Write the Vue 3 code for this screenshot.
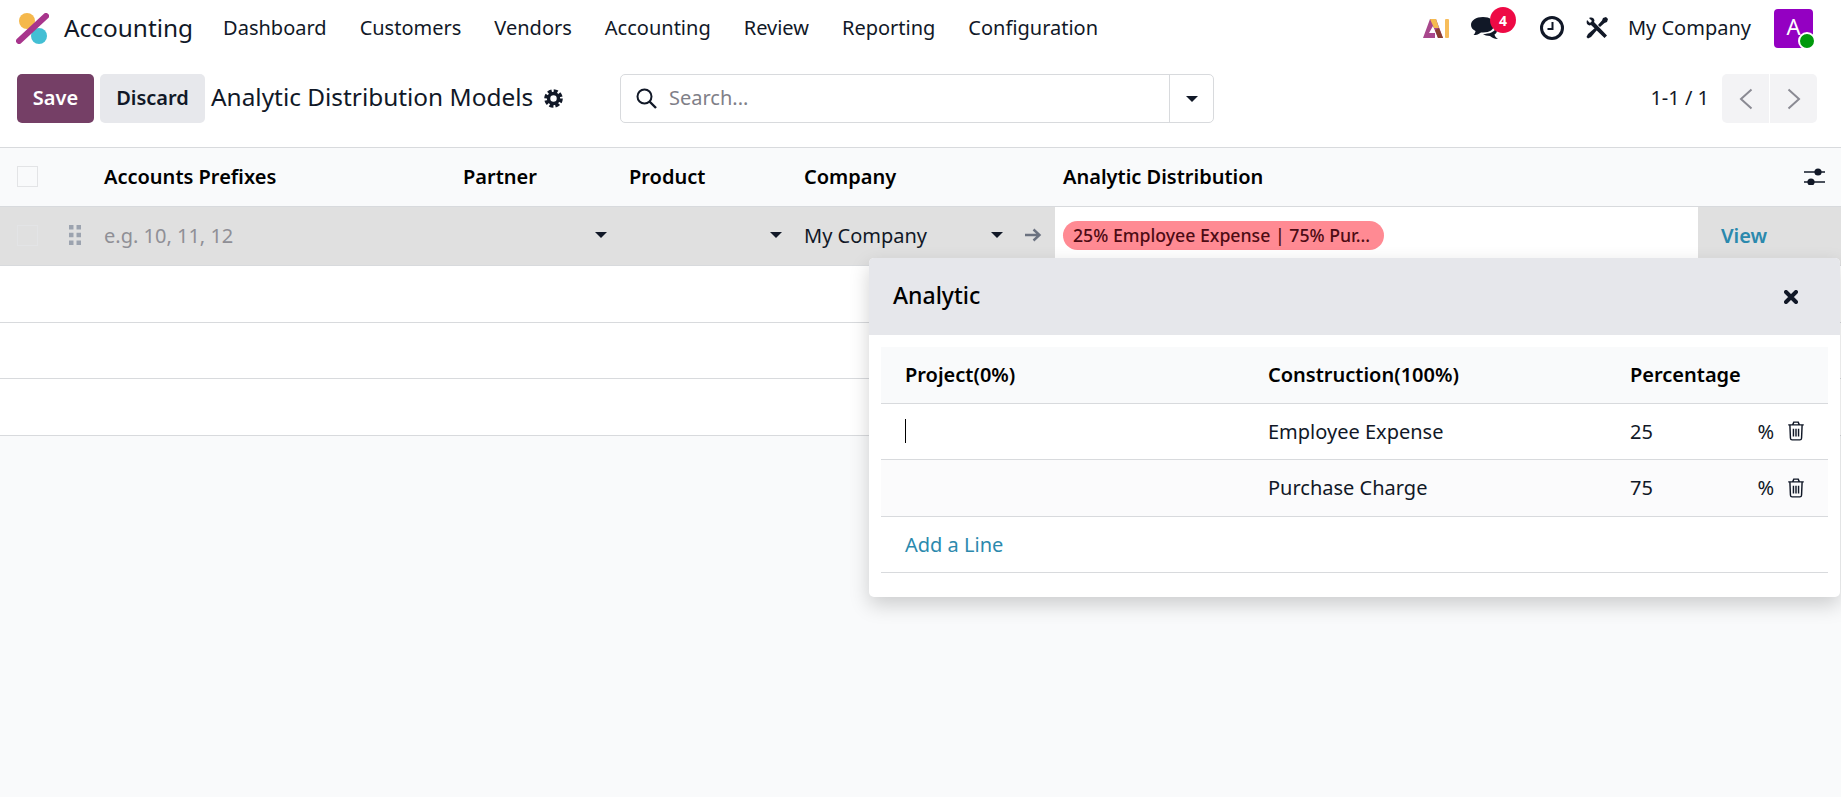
<script setup>
const navItems = ['Dashboard', 'Customers', 'Vendors', 'Accounting', 'Review', 'Reporting', 'Configuration']

const lines = [
  { name: 'Employee Expense', percent: 25 },
  { name: 'Purchase Charge', percent: 75 },
]
</script>

<template>
  <div class="page">
    <header class="nav">
      <svg class="logo" viewBox="0 0 33 31" width="33" height="31">
        <circle cx="11" cy="8" r="8" fill="#f5b84c" />
        <circle cx="23" cy="23" r="8" fill="#43bfd4" />
        <line x1="3" y1="28" x2="30" y2="3" stroke="#a8358c" stroke-width="6" stroke-linecap="round" />
      </svg>
      <span class="app-name">Accounting</span>
      <nav class="menu">
        <a v-for="item in navItems" :key="item">{{ item }}</a>
      </nav>

      <div class="systray">
        <svg class="ai" viewBox="0 0 26 20" width="26" height="20">
          <path d="M0 20 L7 1 H13 L20 20 H15 L10 8 L6 15 H12 V20 Z" fill="#a8478c" />
          <path d="M7 1 H13 L16 10 L11 10 Z" fill="#f5bb4f" />
          <path d="M12 12 L16 10 L20 20 H15 Z" fill="#8a4030" />
          <rect x="22" y="1" width="4" height="19" rx="1" fill="#f7bd5b" />
        </svg>
        <div class="chat">
          <svg viewBox="0 0 28 22" width="28" height="22">
            <path d="M12 0 C19 0 23 3.5 23 8 C23 12.5 19 15.5 12 15.5 L10 15.4 C8 17 5.5 18 2.5 18 C4 16.5 4.5 15 4.5 14 C1.5 12.5 0 10.5 0 8 C0 3.5 5 0 12 0 Z" fill="#111827" />
            <path d="M25 10.5 C27 14 25.5 16.5 23.5 17.5 C23.8 19 25 21 27 22 C23 22 20.5 20.5 19 19 C16 19 13.5 18.2 12 17 C18 17 24 15 25 10.5 Z" fill="#111827" />
          </svg>
          <span class="badge">4</span>
        </div>
        <svg class="clock" viewBox="0 0 24 24" width="24" height="24">
          <circle cx="12" cy="12" r="10.5" fill="none" stroke="#111827" stroke-width="3" />
          <path d="M12.5 6 V13 H7.5" fill="none" stroke="#111827" stroke-width="2" />
        </svg>
        <svg class="tools" viewBox="0 0 22 22" width="22" height="22">
          <path d="M3 1 L6 4 L4 6 L1 3 C0 6 1 8 3.5 8.5 L5 8 L18.5 21 L21 18.5 L8 5 L8.5 3.5 C8 1 6 0 3 1 Z" fill="#111827" />
          <path d="M12 8 L16 3.5 L17 1 L20 0 L22 2 L21 5 L18.5 6 L14 10 Z" fill="#111827" />
          <path d="M9.5 10.5 L2 17 L0.5 20 L2 21.5 L5 20 L11.5 12.5 Z" fill="#111827" />
        </svg>
        <span class="company">My Company</span>
        <div class="avatar">
          A
          <span class="status"></span>
        </div>
      </div>
    </header>

    <section class="control">
      <button class="btn btn-save">Save</button>
      <button class="btn btn-discard">Discard</button>
      <span class="title">Analytic Distribution Models</span>
      <svg class="gear" viewBox="0 0 20 20" width="19" height="19">
        <circle cx="10" cy="10" r="5.2" fill="none" stroke="#111827" stroke-width="3.6" />
        <circle cx="10" cy="10" r="8" fill="none" stroke="#111827" stroke-width="3.6" stroke-dasharray="4.2 2.08" />
      </svg>

      <div class="search">
        <svg viewBox="0 0 21 21" width="21" height="21">
          <circle cx="8.5" cy="8.5" r="7" fill="none" stroke="#111827" stroke-width="2" />
          <line x1="13.5" y1="13.5" x2="20" y2="20" stroke="#111827" stroke-width="2.4" />
        </svg>
        <span class="search-text">Search...</span>
        <span class="search-drop"><i class="caret"></i></span>
      </div>

      <div class="pager">
        <span class="pager-text">1-1 / 1</span>
        <div class="pager-btns">
          <span class="pager-btn">
            <svg viewBox="0 0 14 22" width="14" height="22"><path d="M12.5 1.5 L2 11 L12.5 20.5" fill="none" stroke="#8a8a93" stroke-width="2" /></svg>
          </span>
          <span class="pager-btn">
            <svg viewBox="0 0 14 22" width="14" height="22"><path d="M1.5 1.5 L12 11 L1.5 20.5" fill="none" stroke="#8a8a93" stroke-width="2" /></svg>
          </span>
        </div>
      </div>
    </section>

    <section class="list">
      <div class="row head">
        <div class="cell"><span class="check"></span></div>
        <div class="cell"></div>
        <div class="cell">Accounts Prefixes</div>
        <div class="cell">Partner</div>
        <div class="cell">Product</div>
        <div class="cell">Company</div>
        <div class="cell">Analytic Distribution</div>
        <div class="cell cell-opts">
          <svg viewBox="0 0 21 17" width="21" height="17">
            <line x1="0" y1="4" x2="21" y2="4" stroke="#111827" stroke-width="1.5" />
            <line x1="0" y1="14" x2="21" y2="14" stroke="#111827" stroke-width="1.5" />
            <circle cx="14" cy="4" r="3.6" fill="#111827" />
            <circle cx="7" cy="14" r="3.6" fill="#111827" />
          </svg>
        </div>
      </div>

      <div class="row edit">
        <div class="cell"><span class="check"></span></div>
        <div class="cell">
          <svg class="handle" viewBox="0 0 12 20" width="12" height="20">
            <g fill="#9ca3af">
              <rect x="0" y="0" width="4.5" height="4.5" /><rect x="7.5" y="0" width="4.5" height="4.5" />
              <rect x="0" y="7.75" width="4.5" height="4.5" /><rect x="7.5" y="7.75" width="4.5" height="4.5" />
              <rect x="0" y="15.5" width="4.5" height="4.5" /><rect x="7.5" y="15.5" width="4.5" height="4.5" />
            </g>
          </svg>
        </div>
        <div class="cell placeholder">e.g. 10, 11, 12</div>
        <div class="cell cell-select"><i class="caret"></i></div>
        <div class="cell cell-select"><i class="caret"></i></div>
        <div class="cell cell-company">
          <span>My Company</span>
          <i class="caret"></i>
          <svg class="arrow" viewBox="0 0 18 14" width="18" height="14">
            <path d="M1 7 H15 M9.5 1.5 L15.5 7 L9.5 12.5" fill="none" stroke="#6b7280" stroke-width="2.4" />
          </svg>
        </div>
        <div class="cell cell-analytic">
          <span class="pill">25% Employee Expense | 75% Pur...</span>
        </div>
        <div class="cell cell-view">View</div>
      </div>

      <div class="row empty"></div>
      <div class="row empty"></div>
      <div class="row empty"></div>

      <div class="popover">
        <div class="pop-head">
          <span class="pop-title">Analytic</span>
          <svg viewBox="0 0 14 14" width="14" height="14">
            <path d="M2 2 L12 12 M12 2 L2 12" stroke="#111827" stroke-width="4" stroke-linecap="round" />
          </svg>
        </div>
        <div class="pop-body">
          <div class="pop-row pop-th">
            <span>Project(0%)</span>
            <span>Construction(100%)</span>
            <span>Percentage</span>
          </div>
          <div v-for="(line, index) in lines" :key="line.name" class="pop-row" :class="{ 'pop-row-alt': index === 1 }">
            <span><i v-if="index === 0" class="text-caret"></i></span>
            <span>{{ line.name }}</span>
            <span class="pop-percent">
              {{ line.percent }}
              <span class="pop-tail">
                %
                <svg viewBox="0 0 16 18" width="18" height="20">
                  <path d="M1 3.5 H15 M5 3.5 L6 1 H10 L11 3.5 M2.5 3.5 L3 15.5 Q3.1 17 4.5 17 H11.5 Q12.9 17 13 15.5 L13.5 3.5 M5.7 7 V14 M8 7 V14 M10.3 7 V14" fill="none" stroke="#111827" stroke-width="1.3" />
                </svg>
              </span>
            </span>
          </div>
          <div class="pop-row pop-add"><a>Add a Line</a></div>
        </div>
      </div>
    </section>
  </div>
</template>

<style>
body {
  background: #f9fafb;
}
</style>

<style scoped>
.page {
  min-height: 797px;
  background: #f9fafb;
  color: #111827;
  font-family: "Noto Sans", sans-serif;
  font-size: 20px;
  overflow: hidden;
}

.nav {
  height: 56px;
  background: #fff;
  display: flex;
  align-items: center;
  padding-left: 16px;
  padding-right: 28px;
}

.app-name {
  font-size: 24.4px;
  margin-left: 15px;
  padding-bottom: 2px;
}

.menu {
  display: flex;
  gap: 33px;
  margin-left: 30px;
  padding-bottom: 2px;
}

.systray {
  margin-left: auto;
  display: flex;
  align-items: center;
}

.chat {
  position: relative;
  margin-left: 22px;
  width: 32px;
  height: 22px;
  padding-top: 0;
}

.badge {
  position: absolute;
  left: 19px;
  top: -10px;
  width: 26px;
  height: 26px;
  border-radius: 50%;
  background: #ee0a45;
  color: #fff;
  font-size: 14px;
  font-weight: 700;
  display: flex;
  align-items: center;
  justify-content: center;
}

.clock {
  margin-left: 37px;
}

.tools {
  margin-left: 22px;
}

.company {
  margin-left: 20px;
  padding-bottom: 2px;
}

.avatar {
  position: relative;
  margin-left: 23px;
  width: 39px;
  height: 39px;
  border-radius: 4px;
  background: #9400c2;
  color: #fff;
  font-size: 22px;
  padding-bottom: 5px;
  box-sizing: border-box;
  display: flex;
  align-items: center;
  justify-content: center;
}

.status {
  position: absolute;
  right: -3px;
  bottom: -2px;
  width: 14px;
  height: 14px;
  border: 2px solid #fff;
  border-radius: 50%;
  background: #00990c;
}

.control {
  height: 91px;
  background: #fff;
  padding: 18px 24px 24px 17px;
  box-sizing: border-box;
  display: flex;
  align-items: center;
}

.btn {
  height: 49px;
  border: 0;
  border-radius: 5px;
  font-family: inherit;
  font-size: 20px;
  font-weight: 600;
  padding: 0 0 2px;
}

.btn-save {
  width: 77px;
  background: #753f66;
  color: #fff;
}

.btn-discard {
  width: 105px;
  margin-left: 6px;
  background: #e7e8ec;
  color: #111827;
}

.title {
  font-size: 24.4px;
  margin-left: 6px;
  padding-bottom: 5px;
}

.gear {
  margin-left: 11px;
}

.search {
  position: absolute;
  left: 620px;
  width: 594px;
  height: 49px;
  box-sizing: border-box;
  background: #fff;
  border: 1px solid #d8dadd;
  border-radius: 5px;
  display: flex;
  align-items: center;
  padding-left: 15px;
}

.search-text {
  margin-left: 12px;
  color: #7f8088;
  padding-bottom: 2px;
}

.search-drop {
  margin-left: auto;
  width: 43px;
  height: 100%;
  border-left: 1px solid #d8dadd;
  display: flex;
  align-items: center;
  justify-content: center;
}

.caret {
  display: block;
  width: 0;
  height: 0;
  border-left: 6px solid transparent;
  border-right: 6px solid transparent;
  border-top: 6px solid #111827;
}

.pager {
  margin-left: auto;
  display: flex;
  align-items: center;
  gap: 13px;
}

.pager-text {
  padding-bottom: 2px;
}

.pager-btns {
  display: flex;
  gap: 1px;
}

.pager-btn {
  width: 47px;
  height: 49px;
  background: #f3f3f5;
  display: flex;
  align-items: center;
  justify-content: center;
}

.pager-btn:first-child {
  border-radius: 5px 0 0 5px;
}

.pager-btn:last-child {
  border-radius: 0 5px 5px 0;
}

.list {
  position: relative;
}

.row {
  display: grid;
  grid-template-columns: 58px 38px 359px 166px 175px 259px 643px 143px;
  box-sizing: border-box;
  border-bottom: 1px solid #d8dadd;
}

.cell {
  display: flex;
  align-items: center;
  padding-left: 8px;
  box-sizing: border-box;
}

.cell:first-child {
  padding-left: 17px;
}

.head {
  height: 60px;
  background: #f9fafb;
  border-top: 1px solid #d8dadd;
  padding-bottom: 2px;
  font-weight: 600;
  color: #000;
}

.cell-opts {
  padding-left: 106px;
}

.check {
  width: 21px;
  height: 21px;
  box-sizing: border-box;
  border: 1px solid #e3e4e6;
  background: transparent;
}

.edit {
  height: 59px;
  padding-bottom: 2px;
  background: #e0e0e0;
}

.edit .cell:nth-child(2) {
  padding-left: 11px;
}

.placeholder {
  color: #8f8f96;
}

.cell-select {
  justify-content: flex-end;
  padding-right: 14px;
}

.cell-company {
  padding-right: 13px;
}

.cell-company .caret {
  margin-left: auto;
}

.arrow {
  margin-left: 21px;
}

.cell-analytic {
  background: #fff;
}

.pill {
  height: 29px;
  width: 321px;
  box-sizing: border-box;
  padding-left: 10px;
  border-radius: 15px;
  background: #ff8a93;
  color: #4d0b14;
  font-size: 17.7px;
  font-weight: 500;
  line-height: 28px;
  white-space: nowrap;
}

.cell-view {
  padding-left: 23px;
  color: #2b89ad;
  font-weight: 600;
}

.empty {
  height: 56.67px;
  background: #fff;
}

.popover {
  position: absolute;
  left: 869px;
  right: 1px;
  top: 111px;
  height: 339px;
  background: #fff;
  border-radius: 5px;
  box-shadow: 0 8px 20px rgba(0, 0, 0, 0.18);
  overflow: hidden;
}

.pop-head {
  height: 77px;
  background: #e6e7eb;
  display: flex;
  align-items: center;
  justify-content: space-between;
  padding: 0 42px 0 24px;
}

.pop-title {
  font-size: 23px;
  font-weight: 500;
  color: #000;
  padding-bottom: 3px;
}

.pop-body {
  padding: 12px 12px 0;
}

.pop-row {
  height: 56.6px;
  box-sizing: border-box;
  display: grid;
  grid-template-columns: 363px 362px 1fr;
  padding-left: 24px;
  align-items: center;
  border-bottom: 1px solid #d8dadd;
}

.pop-th {
  background: #f9fafb;
  font-weight: 600;
  color: #000;
}

.pop-row-alt {
  background: #fbfbfc;
}

.pop-percent {
  display: flex;
  align-items: center;
}

.pop-tail {
  margin-left: auto;
  display: flex;
  align-items: center;
  gap: 13px;
  padding-right: 23px;
}

.text-caret {
  display: block;
  width: 1px;
  height: 24px;
  background: #000;
}

.pop-add a {
  color: #2b89ad;
}
</style>
